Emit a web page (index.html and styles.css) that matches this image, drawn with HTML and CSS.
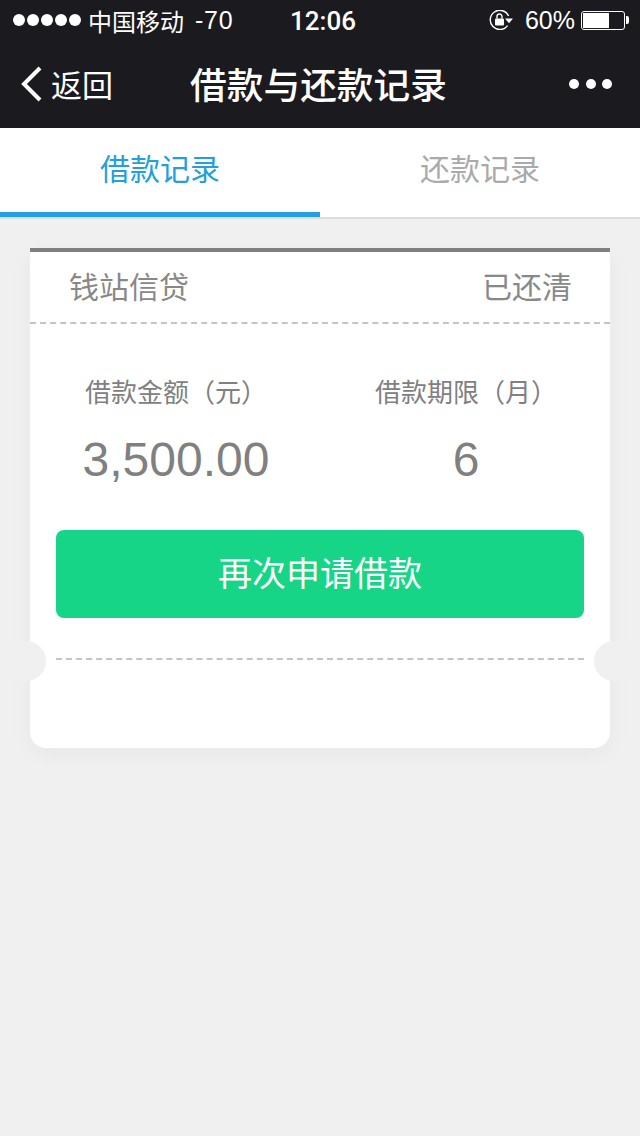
FILE: index.html
```html
<!DOCTYPE html>
<html lang="zh-CN">
<head>
  <meta charset="UTF-8">
  <title>借款与还款记录</title>
  <link rel="stylesheet" href="styles.css">
</head>
<body>
  <!-- Status bar -->
  <div class="status-bar">
    <div class="status-left">
      <div class="signal"><i></i><i></i><i></i><i></i><i></i></div>
      <span class="carrier">中国移动</span>
      <span class="db">-70</span>
    </div>
    <div class="status-time">12:06</div>
    <div class="status-right">
      <svg class="lock-icon" width="24" height="20" viewBox="0 0 24 20">
        <path d="M18.6 15.6A9.6 9.6 0 1 1 19.6 6" fill="none" stroke="#fff" stroke-width="1.4"/>
        <path d="M16 8.5h8l-4 4.8z" fill="#fff"/>
        <rect x="6" y="8.5" width="9" height="7" rx="1" fill="#fff"/>
        <path d="M8 8.5V6.5a2.5 2.5 0 0 1 5 0v2" fill="none" stroke="#fff" stroke-width="1.4"/>
      </svg>
      <span class="percent">60%</span>
      <div class="battery"><div class="battery-fill"></div></div>
      <div class="battery-tip"></div>
    </div>
  </div>

  <!-- Nav bar -->
  <div class="nav-bar">
    <div class="nav-back">
      <svg width="24" height="36" viewBox="0 0 24 36">
        <path d="M20 2L4 18l16 16" fill="none" stroke="#fff" stroke-width="4"/>
      </svg>
      <span>返回</span>
    </div>
    <div class="nav-title">借款与还款记录</div>
    <div class="nav-more"><i></i><i></i><i></i></div>
  </div>

  <!-- Tabs -->
  <div class="tabs">
    <div class="tab tab-active">借款记录</div>
    <div class="tab">还款记录</div>
  </div>

  <!-- Record card -->
  <div class="content">
    <div class="card">
      <div class="card-head">
        <span>钱站信贷</span>
        <span>已还清</span>
      </div>
      <div class="info">
        <div class="info-col info-amount">
          <div class="info-label">借款金额（元）</div>
          <div class="info-value">3,500.00</div>
        </div>
        <div class="info-col info-term">
          <div class="info-label">借款期限（月）</div>
          <div class="info-value">6</div>
        </div>
      </div>
      <div class="apply-btn">再次申请借款</div>
      <div class="perforation"></div>
      <div class="notch notch-left"></div>
      <div class="notch notch-right"></div>
    </div>
  </div>
</body>
</html>
```

FILE: styles.css
```css
body {
  margin: 0;
  width: 640px;
  height: 1136px;
  overflow: hidden;
  background-color: #f0f0f0;
  font-family: "Liberation Sans", "Noto Sans CJK SC", sans-serif;
}

/* Status bar */
.status-bar {
  height: 40px;
  padding: 0 11px 0 13px;
  background-color: #1a1a1f;
  color: #fff;
  display: flex;
  align-items: center;
  justify-content: space-between;
  position: relative;
  font-size: 25px;
}

.status-left {
  display: flex;
  align-items: center;
}

.signal {
  display: flex;
  gap: 2px;
}

.signal i {
  width: 12px;
  height: 12px;
  border-radius: 50%;
  background-color: #fff;
}

.carrier {
  margin-left: 7px;
  font-size: 24px;
}

.db {
  margin-left: 11px;
  font-size: 25px;
  letter-spacing: 0.7px;
}

.status-time {
  position: absolute;
  left: 290px;
  top: 6px;
  font-family: Roboto, sans-serif;
  font-weight: 500;
  font-size: 26px;
}

.status-right {
  display: flex;
  align-items: center;
}

.lock-icon {
  margin-right: 12px;
}

.percent {
  margin-right: 6px;
}

.battery {
  width: 40px;
  height: 15px;
  border: 1px solid #fff;
  border-radius: 3px;
  padding: 1px;
}

.battery-fill {
  width: 26px;
  height: 15px;
  background-color: #fff;
}

.battery-tip {
  width: 3px;
  height: 8px;
  margin-left: 1px;
  background-color: #fff;
  border-radius: 0 2px 2px 0;
}

/* Nav bar */
.nav-bar {
  height: 88px;
  background-color: #1a1a1f;
  color: #fff;
  display: flex;
  align-items: center;
  justify-content: space-between;
  position: relative;
}

.nav-back {
  display: flex;
  align-items: center;
  margin-left: 20px;
  font-size: 31px;
}

.nav-back span {
  margin-left: 7px;
  padding-bottom: 2px;
}

.nav-title {
  position: absolute;
  left: 0;
  right: 0;
  padding: 0 3px 2px 0;
  text-align: center;
  font-size: 36.7px;
  font-weight: 500;
}

.nav-more {
  display: flex;
  gap: 6.5px;
  margin-right: 28px;
}

.nav-more i {
  width: 10px;
  height: 10px;
  border-radius: 50%;
  background-color: #fff;
}

/* Tabs */
.tabs {
  display: flex;
  height: 89px;
  background-color: #fff;
  border-bottom: 2px solid #ddd;
  box-sizing: content-box;
}

.tab {
  flex: 1;
  height: 84px;
  line-height: 84px;
  text-align: center;
  font-size: 30px;
  color: #aaa;
}

.tab-active {
  color: #239fdb;
  height: 84px;
  border-bottom: 5px solid #239fdb;
}

/* Record card */
.content {
  padding: 29px 30px 0;
}

.card {
  position: relative;
  height: 496px;
  background-color: #fff;
  border-top: 4px solid #808080;
  border-radius: 0 0 16px 16px;
  box-shadow: 0 6px 24px rgba(0, 0, 0, 0.04);
}

.card-head {
  height: 66px;
  padding: 0 38px 4px 39px;
  display: flex;
  align-items: center;
  justify-content: space-between;
  font-size: 30px;
  color: #888;
  border-bottom: 2px dashed #c4c4c4;
}

.info {
  display: flex;
  padding-top: 49px;
  color: #808080;
}

.info-col {
  text-align: center;
}

.info-amount {
  width: 292px;
}

.info-term {
  width: 288px;
}

.info-label {
  font-size: 26px;
  line-height: 40px;
}

.info-value {
  margin-top: 22px;
  font-size: 48px;
  line-height: 50px;
}

.apply-btn {
  margin: 45px 26px 0;
  height: 88px;
  line-height: 88px;
  text-align: center;
  font-size: 34px;
  color: #fff;
  background-color: #17d586;
  border-radius: 8px;
}

.perforation {
  margin: 40px 26px 0;
  border-top: 2px dashed #c4c4c4;
}

.notch {
  position: absolute;
  top: 389px;
  width: 40px;
  height: 40px;
  border-radius: 50%;
  background-color: #f0f0f0;
}

.notch-left {
  left: -24px;
}

.notch-right {
  right: -24px;
}
```
